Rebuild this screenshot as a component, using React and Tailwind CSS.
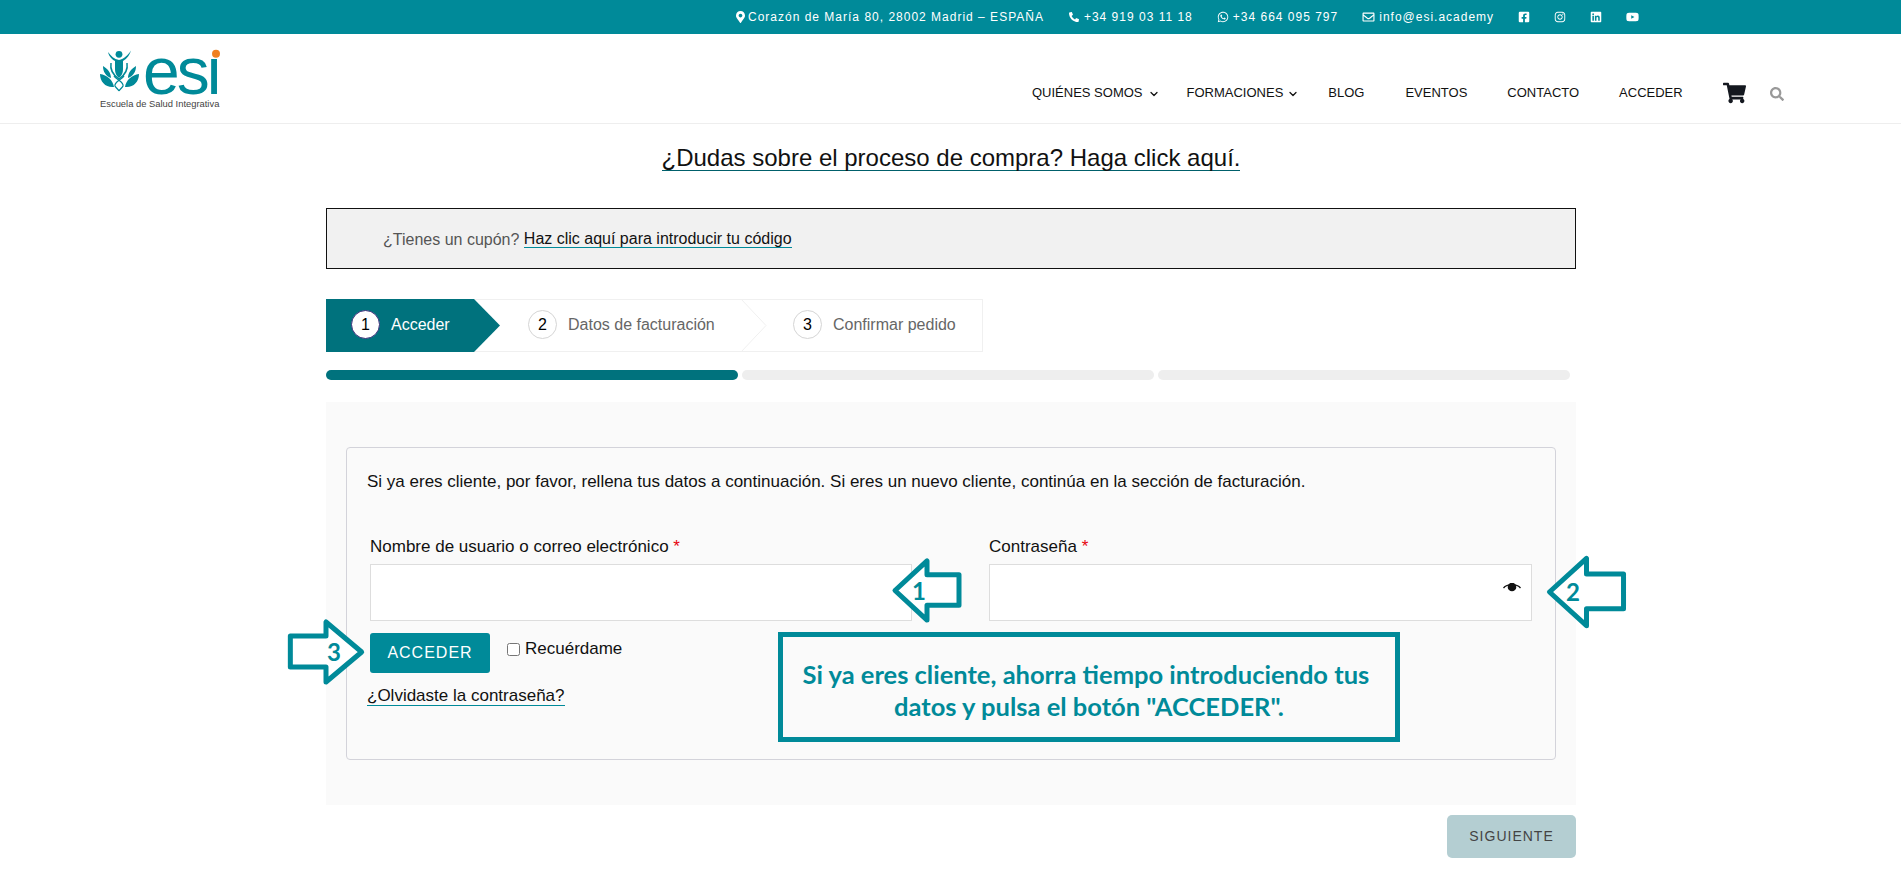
import { ChevronDown } from 'lucide-react';
import { FaFacebookSquare, FaInstagram, FaLinkedin, FaYoutube, FaWhatsapp, FaShoppingCart, FaMapMarkerAlt, FaPhoneAlt, FaSearch, FaRegEnvelope } from 'react-icons/fa';

// logo dibujado: figura + textos reales dentro del svg
const Logo = () => (
  <svg viewBox="0 0 120 60" className="w-[120px] h-[60px] overflow-visible">
    <circle cx="19" cy="5.3" r="3.4" fill="#008a99" />
    <path d="M8 3 C9 8 13 11 15 12 L15 20 C15 25 17 27 19 29 C21 27 23 25 23 20 L23 12 C25 11 29 8 31 1.5 C28 6 24 10 19 11 C14 10 11 7 8 3Z" fill="#008a99" />
    <path d="M11 14 C10 20 13 26 19 30 C25 26 28 20 27 14" fill="none" stroke="#008a99" strokeWidth="1.5" />
    <path d="M14 27 C17 31 24 33 23 37 C22 39 20 40 19 42 M24 27 C21 31 14 33 15 37 C16 39 18 40 19 42" fill="none" stroke="#008a99" strokeWidth="1.3" />
    <path d="M0 25 C7 26 13 31 14 38 C6 39 0 33 0 25Z M39 25 C32 26 26 31 25 38 C33 39 39 33 39 25Z M3 17 C8 20 11 24 11 29 C6 27 3 23 3 17Z M36 17 C31 20 28 24 28 29 C33 27 36 23 36 17Z" fill="#008a99" />
    <text x="43" y="45" fontFamily="Liberation Sans" fontSize="66" letterSpacing="-3" fill="#008a99">esi</text>
    <rect x="108" y="-5" width="14" height="14" fill="#fff" />
    <circle cx="116" cy="4.8" r="4" fill="#f08020" />
    <text x="0" y="58" fontFamily="Liberation Sans" fontSize="9.4" fill="#444">Escuela de Salud Integrativa</text>
  </svg>
);

const Arrow = ({ num, flip, className, numClass }) => (
  <div className={`absolute ${className}`}>
    <svg viewBox="0 0 70 66" preserveAspectRatio="none" className="w-full h-full overflow-visible">
      <path
        d={flip
          ? 'M3 33 L35 3 L35 17 L67 17 L67 48 L35 48 L35 63 Z'
          : 'M67 33 L35 3 L35 17 L3 17 L3 48 L35 48 L35 63 Z'}
        fill="#fff" stroke="#008a99" strokeWidth="5" strokeLinejoin="round" vectorEffect="non-scaling-stroke"
      />
    </svg>
    <span className={`absolute font-['Lato',sans-serif] font-bold text-[24px] leading-none text-[#008a99] ${numClass}`}>{num}</span>
  </div>
);

const Step = ({ n, label, active }) => (
  <div className="flex items-center gap-[11px]">
    <span className={`w-[29px] h-[29px] rounded-full flex items-center justify-center text-[16px] text-black bg-white border ${active ? 'border-[#3a2f7a]' : 'border-[#d5d5d5]'}`}>{n}</span>
    <span className={`text-[16px] ${active ? 'text-white' : 'text-[#666]'}`}>{label}</span>
  </div>
);

export default function App() {
  return (
    <div className="min-h-[873px] bg-white font-['Liberation_Sans',Arial,sans-serif] text-[#111] overflow-hidden">
      {/* barra superior */}
      <div className="h-[34px] bg-[#008a99] flex items-center pl-[736px] text-[12px] tracking-[1px] text-white whitespace-nowrap">
        <FaMapMarkerAlt className="w-[9px] h-[12px] mr-[3px]" />
        <span>Corazón de María 80, 28002 Madrid – ESPAÑA</span>
        <FaPhoneAlt className="w-[10px] h-[10px] ml-[25px] mr-[5px]" />
        <span>+34 919 03 11 18</span>
        <FaWhatsapp className="w-[12px] h-[12px] ml-[24px] mr-[4px]" />
        <span>+34 664 095 797</span>
        <FaRegEnvelope className="w-[13px] h-[12px] ml-[24px] mr-[4px]" />
        <span>info@esi.academy</span>
        <div className="flex items-center gap-[24px] ml-[24px]">
          <FaFacebookSquare className="w-[12px] h-[12px]" />
          <FaInstagram className="w-[12px] h-[12px]" />
          <FaLinkedin className="w-[12px] h-[12px]" />
          <FaYoutube className="w-[13px] h-[12px]" />
        </div>
      </div>

      {/* cabecera */}
      <header className="h-[90px] border-b border-[#eee] flex items-start pl-[100px]">
        <div className="pt-[15px]"><Logo /></div>
        <nav className="ml-[812px] pt-[47px] flex items-center text-[13px] text-[#111] whitespace-nowrap">
          <span>QUIÉNES SOMOS</span>
          <ChevronDown className="w-[12px] h-[12px] ml-[5px] mt-[3px]" strokeWidth={2.5} />
          <span className="ml-[27px]">FORMACIONES</span>
          <ChevronDown className="w-[12px] h-[12px] ml-[4px] mt-[3px]" strokeWidth={2.5} />
          <span className="ml-[29px]">BLOG</span>
          <span className="ml-[41px]">EVENTOS</span>
          <span className="ml-[40px]">CONTACTO</span>
          <span className="ml-[40px]">ACCEDER</span>
          <FaShoppingCart className="w-[23px] h-[22px] ml-[40px] mt-[1px] text-[#14181f]" />
          <FaSearch className="w-[14px] h-[14px] ml-[24px] mt-[3px] text-[#999]" />
        </nav>
      </header>

      <main className="w-[1250px] ml-[326px]">
        <div className="h-[84px] flex justify-center items-start pt-[22px]">
          <a className="text-[24px] leading-[24px] text-[#111] border-b border-[#00606b]">¿Dudas sobre el proceso de compra? Haga click aquí.</a>
        </div>

        <div className="h-[61px] bg-[#f1f1f1] border border-[#111] flex items-center pl-[56px] pt-[2px] text-[16px] text-[#555]">
          ¿Tienes un cupón?&nbsp;<a className="leading-[16px] text-[#111] border-b border-[#008a99]">Haz clic aquí para introducir tu código</a>
        </div>

        {/* pasos */}
        <div className="mt-[30px] relative w-[657px] h-[53px] border border-[#f0f0f0] bg-white flex items-center">
          <svg viewBox="0 0 657 53" className="absolute inset-[-1px] w-[657px] h-[53px]">
            <path d="M0 0 H148 L174 26.5 L148 53 H0 Z" fill="#00727d" />
            <path d="M415 0 L440 26.5 L415 53" fill="none" stroke="#f0f0f0" />
          </svg>
          <div className="relative flex items-center w-full h-full pb-[2px]">
            <div className="ml-[24px] w-[177px]"><Step n="1" label="Acceder" active /></div>
            <div className="w-[265px]"><Step n="2" label="Datos de facturación" /></div>
            <Step n="3" label="Confirmar pedido" />
          </div>
        </div>

        <div className="mt-[18px] flex gap-[4px] w-[1244px]">
          <div className="h-[10px] flex-1 rounded-full bg-[#00727d]" />
          <div className="h-[10px] flex-1 rounded-full bg-[#eeeeee]" />
          <div className="h-[10px] flex-1 rounded-full bg-[#eeeeee]" />
        </div>

        {/* formulario */}
        <div className="mt-[22px] h-[403px] bg-[#fafafa] px-[20px] pt-[45px]">
          <div className="relative h-[313px] border border-[#d3d3da] rounded-[4px] pl-[20px] pr-[23px] pt-[24px]">
            <p className="text-[17px] leading-[20px] text-[#111] whitespace-nowrap">Si ya eres cliente, por favor, rellena tus datos a continuación. Si eres un nuevo cliente, continúa en la sección de facturación.</p>
            <div className="mt-[45px] ml-[3px] flex gap-[77px]">
              <div className="w-[542px]">
                <label className="block text-[17px] leading-[20px] text-[#111]">Nombre de usuario o correo electrónico <span className="text-red-600">*</span></label>
                <input className="mt-[7px] block w-full h-[57px] bg-white border border-[#ddd]" />
              </div>
              <div className="w-[543px]">
                <label className="block text-[17px] leading-[20px] text-[#111]">Contraseña <span className="text-red-600">*</span></label>
                <div className="relative mt-[7px]">
                  <input className="block w-full h-[57px] bg-white border border-[#ddd]" />
                  <svg viewBox="0 0 18 9" className="absolute right-[11px] top-[19px] w-[18px] h-[9px]">
                    <path d="M0.5 5 C4 0.5 14 0.5 17.5 5" fill="none" stroke="#111" strokeWidth="1.3" />
                    <circle cx="9" cy="4" r="4.3" fill="#111" />
                  </svg>
                </div>
              </div>
            </div>
            <div className="mt-[12px] ml-[3px] flex items-start">
              <button className="w-[120px] h-[40px] rounded-[3px] bg-[#008a99] text-white text-[16px] tracking-[1px]">ACCEDER</button>
              <label className="ml-[17px] mt-[6px] flex items-center text-[17px] leading-[20px] text-[#111]">
                <input type="checkbox" className="w-[13px] h-[13px] mr-[5px]" />Recuérdame
              </label>
            </div>
            <a className="inline-block mt-[13px] text-[17px] leading-[19px] text-[#111] border-b border-[#008a99]">¿Olvidaste la contraseña?</a>

            {/* anotaciones sobre la captura */}
            <Arrow num="1" flip className="left-[545px] top-[110px] w-[70px] h-[65px]" numClass="left-[20px] top-[21px]" />
            <Arrow num="2" flip className="left-[1199px] top-[107px] w-[81px] h-[74px]" numClass="left-[20px] top-[25px]" />
            <Arrow num="3" className="left-[-60px] top-[171px] w-[78px] h-[66px]" numClass="left-[40px] top-[21px]" />
            <div className="absolute left-[431px] top-[184px] w-[622px] h-[110px] border-[5px] border-[#008a99] bg-[#fafafa] pt-[5px] flex items-center justify-center text-center font-['Lato',sans-serif] font-bold text-[25.5px] leading-[32px] text-[#008a99] whitespace-nowrap">
              <p>Si ya eres cliente, ahorra tiempo introduciendo tus&nbsp;<br />datos y pulsa el botón "ACCEDER".</p>
            </div>
          </div>
        </div>

        <div className="mt-[10px] flex justify-end">
          <button className="w-[129px] h-[43px] rounded-[5px] bg-[#b4ced2] text-[#444] text-[14px] tracking-[1px]">SIGUIENTE</button>
        </div>
      </main>
    </div>
  );
}
